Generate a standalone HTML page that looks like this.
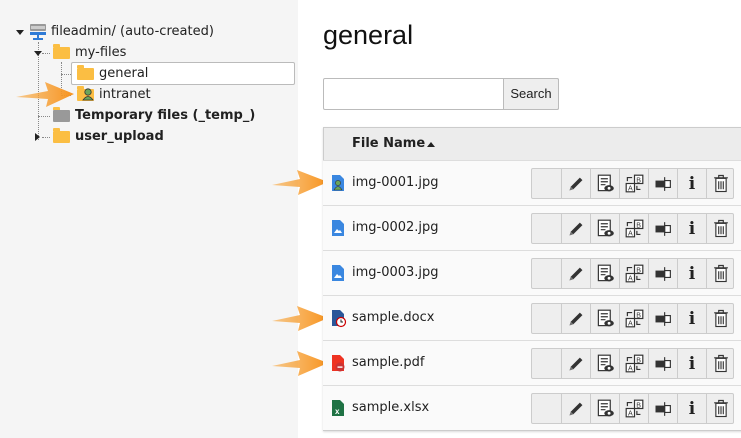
<!DOCTYPE html>
<html><head><meta charset="utf-8"><style>
*{box-sizing:border-box;margin:0;padding:0}
body{width:741px;height:438px;overflow:hidden;background:#fff;font-family:"DejaVu Sans","Liberation Sans",sans-serif;color:#212121;position:relative}
.abs{position:absolute}
#left{left:0;top:0;width:298px;height:438px;background:#f5f5f5}
.t{position:absolute;font-size:13px;line-height:16px;white-space:nowrap}
.b{font-weight:bold}
.dv{position:absolute;border-left:1px dotted #888}
.dh{position:absolute;border-top:1px dotted #888}
.fold{position:absolute;width:17px;height:12px;background:#fbbe43;border-radius:1px}
.fold:before{content:"";position:absolute;left:0;top:-3px;width:7px;height:3px;background:#fbbe43;border-radius:1px 1px 0 0}
.tri{position:absolute;width:0;height:0;border-left:4px solid transparent;border-right:4px solid transparent;border-top:5px solid #222}
.trir{position:absolute;width:0;height:0;border-top:4px solid transparent;border-bottom:4px solid transparent;border-left:5px solid #222}
.row{position:absolute;left:323px;width:430px;height:45px;background:#fafafa;border-top:1px solid #ddd}
.row .n{position:absolute;left:29px;top:14px;font-size:13px}
.btns{position:absolute;left:208px;top:7px;height:31px;width:203px;border:1px solid #ccc;border-radius:2px;background:#eee;display:flex}
.btns span{flex:0 0 29px;width:29px;height:29px;border-left:1px solid #ccc;display:flex;align-items:center;justify-content:center}
.btns span:first-child{border-left:none}
.btns svg{flex:none}
.fi{position:absolute;left:9px;top:14px;width:12px;height:16px}
</style></head><body>
<div id="left" class="abs"></div>
<div class="tri" style="left:16px;top:30px"></div>
<svg class="abs" style="left:29px;top:23px" width="18" height="18" viewBox="0 0 18 18"><rect x="1" y="1" width="16" height="7" rx="1" fill="#999"/><rect x="2" y="3" width="14" height="3" fill="#ccc"/><rect x="1" y="9" width="16" height="3" fill="#2f7bd6"/><rect x="8" y="12" width="2" height="3" fill="#2f7bd6"/><rect x="4" y="15" width="10" height="2" fill="#2f7bd6"/></svg>
<div class="t" style="left:51px;top:24px">fileadmin/ (auto-created)</div>
<div class="dv" style="left:38px;top:42px;height:98px"></div>
<div class="tri" style="left:34px;top:51px"></div>
<div class="dh" style="left:42px;top:53px;width:8px"></div>
<div class="fold" style="left:53px;top:47px"></div>
<div class="t" style="left:75px;top:45px">my-files</div>
<div class="dv" style="left:61px;top:62px;height:34px"></div>
<div class="dh" style="left:61px;top:74px;width:10px"></div>
<div class="abs" style="left:71px;top:62px;width:224px;height:23px;background:#fff;border:1px solid #bbb;border-radius:2px"></div>
<div class="fold" style="left:77px;top:68px"></div>
<div class="t" style="left:99px;top:66px">general</div>
<div class="dh" style="left:61px;top:95px;width:10px"></div>
<div class="fold" style="left:77px;top:89px"></div>
<svg class="abs" style="left:82px;top:87px" width="12" height="14"><circle cx="6" cy="5" r="3.2" fill="#6ba55b" stroke="#333" stroke-width=".8"/><path d="M1 13 Q6 6 11 13Z" fill="#6ba55b" stroke="#333" stroke-width=".8"/></svg>
<div class="t" style="left:99px;top:87px">intranet</div>
<div class="dh" style="left:38px;top:116px;width:12px"></div>
<div class="fold" style="left:53px;top:110px;background:#999"></div>
<div class="t b" style="left:75px;top:108px">Temporary files (_temp_)</div>
<div class="trir" style="left:35px;top:133px"></div>
<div class="dh" style="left:42px;top:137px;width:8px"></div>
<div class="fold" style="left:53px;top:131px"></div>
<div class="t b" style="left:75px;top:129px">user_upload</div>
<svg class="abs" style="left:0;top:0" width="741" height="438">
<defs><linearGradient id="g" x1="0" x2="1"><stop offset="0" stop-color="#f7a740" stop-opacity=".6"/><stop offset="1" stop-color="#f7931e"/></linearGradient></defs>
<path d="M16 97 L48 91 L45 82 L74 94 L46 107 L48 99 Z" fill="url(#g)"/>
<path d="M272 185 L300 179 L297 170 L328 182 L298 195 L300 187 Z" fill="url(#g)"/>
<path d="M272 321 L300 315 L297 306 L328 318 L298 331 L300 323 Z" fill="url(#g)"/>
<path d="M272 366 L300 360 L297 351 L328 363 L298 376 L300 368 Z" fill="url(#g)"/>
</svg>
<div class="abs" style="left:323px;top:18px;font-size:27px;line-height:34px;font-family:'Liberation Sans',sans-serif;color:#111">general</div>
<div class="abs" style="left:323px;top:78px;width:236px;height:32px;border:1px solid #bbb;border-radius:2px;background:#fff"></div>
<div class="abs" style="left:503px;top:78px;width:56px;height:32px;border:1px solid #bbb;border-radius:0 2px 2px 0;background:#eee;font-size:13px;line-height:30px;text-align:center;font-family:'Liberation Sans',sans-serif">Search</div>
<div class="abs" style="left:323px;top:127px;width:430px;height:304px;border:1px solid #ccc;box-shadow:0 1px 2px rgba(0,0,0,.15)"></div>
<div class="abs" style="left:324px;top:128px;width:430px;height:32px;background:#ececec"></div>
<div class="abs b" style="left:352px;top:136px;font-size:13px">File Name</div>
<div class="abs" style="left:427px;top:142px;border-left:4px solid transparent;border-right:4px solid transparent;border-bottom:5px solid #222"></div>

<div class="row" style="top:160px"><svg class="fi" viewBox="0 0 12 16"><path d="M0 0H8L12 4V16H0Z" fill="#3a87e0"/><circle cx="6" cy="8" r="2.6" fill="#6ba55b" stroke="#333" stroke-width=".6"/><path d="M2 15 Q6 8 10 15Z" fill="#6ba55b" stroke="#333" stroke-width=".6"/></svg><div class="n">img-0001.jpg</div><div class="btns"></div></div>
<div class="row" style="top:205px"><svg class="fi" viewBox="0 0 12 16"><path d="M0 0H8L12 4V16H0Z" fill="#3a87e0"/><path d="M2 13 L5 9 L7 11 L8 10 L10 13Z" fill="#fff"/></svg><div class="n">img-0002.jpg</div><div class="btns"></div></div>
<div class="row" style="top:250px"><svg class="fi" viewBox="0 0 12 16"><path d="M0 0H8L12 4V16H0Z" fill="#3a87e0"/><path d="M2 13 L5 9 L7 11 L8 10 L10 13Z" fill="#fff"/></svg><div class="n">img-0003.jpg</div><div class="btns"></div></div>
<div class="row" style="top:295px"><svg class="fi" viewBox="0 0 12 16" style="overflow:visible"><path d="M0 0H8L12 4V16H0Z" fill="#2a5699"/><circle cx="9" cy="12" r="4.5" fill="#fff" stroke="#c00" stroke-width="1.2"/><path d="M9 9.5V12H11" stroke="#222" stroke-width="1" fill="none"/></svg><div class="n">sample.docx</div><div class="btns"></div></div>
<div class="row" style="top:340px"><svg class="fi" viewBox="0 0 12 16" style="overflow:visible"><path d="M0 0H8L12 4V16H0Z" fill="#e32"/><circle cx="8" cy="12" r="4.5" fill="#c33"/><rect x="5.5" y="11.4" width="5" height="1.4" fill="#fff"/></svg><div class="n">sample.pdf</div><div class="btns"></div></div>
<div class="row" style="top:385px"><svg class="fi" viewBox="0 0 12 16"><path d="M0 0H8L12 4V16H0Z" fill="#1f7244"/><text x="3" y="14" font-size="8" font-weight="bold" fill="#fff" font-family="Liberation Sans">x</text></svg><div class="n">sample.xlsx</div><div class="btns"></div></div>

<script>
var ic='<span></span>'+
'<span><svg width="18" height="18" viewBox="0 0 14 14"><path d="M2 12 L3 9 L10 2 L12 4 L5 11 Z" fill="#333"/><path d="M2 12 L3 9 L5 11Z" fill="#777"/></svg></span>'+
'<span><svg width="19" height="19" viewBox="0 0 16 16"><rect x="2" y="1" width="10" height="13" fill="#fff" stroke="#333"/><path d="M4 4H10M4 6.5H10M4 9H8" stroke="#333"/><ellipse cx="11" cy="12" rx="4" ry="2.6" fill="#333"/><circle cx="11" cy="12" r="1.2" fill="#fff"/></svg></span>'+
'<span><svg width="19" height="19" viewBox="0 0 16 16"><rect x="8" y="1" width="7" height="7" fill="#fff" stroke="#333"/><rect x="1" y="8" width="7" height="7" fill="#fff" stroke="#333"/><text x="9.5" y="7" font-size="6" font-family="Liberation Sans" fill="#333">B</text><text x="2.5" y="14" font-size="6" font-family="Liberation Sans" fill="#333">A</text><path d="M2 6V3H6M10 10V13H13" stroke="#333" fill="none"/></svg></span>'+
'<span><svg width="19" height="16" viewBox="0 0 16 14"><rect x="1" y="4" width="8" height="6" fill="#333"/><rect x="9" y="4" width="5" height="6" fill="#fff" stroke="#333"/><path d="M9 1V13" stroke="#333"/></svg></span>'+
'<span style="font:bold 17px \'DejaVu Serif\',serif;color:#222">i</span>'+
'<span><svg width="16" height="19" viewBox="0 0 14 16"><path d="M1 3H13M5 3V1H9V3" stroke="#333" fill="none"/><rect x="2.5" y="3.5" width="9" height="11.5" fill="#fff" stroke="#333"/><path d="M5 6V13M7 6V13M9 6V13" stroke="#333"/></svg></span>';
document.querySelectorAll('.btns').forEach(function(b){b.innerHTML=ic});
</script>
</body></html>
